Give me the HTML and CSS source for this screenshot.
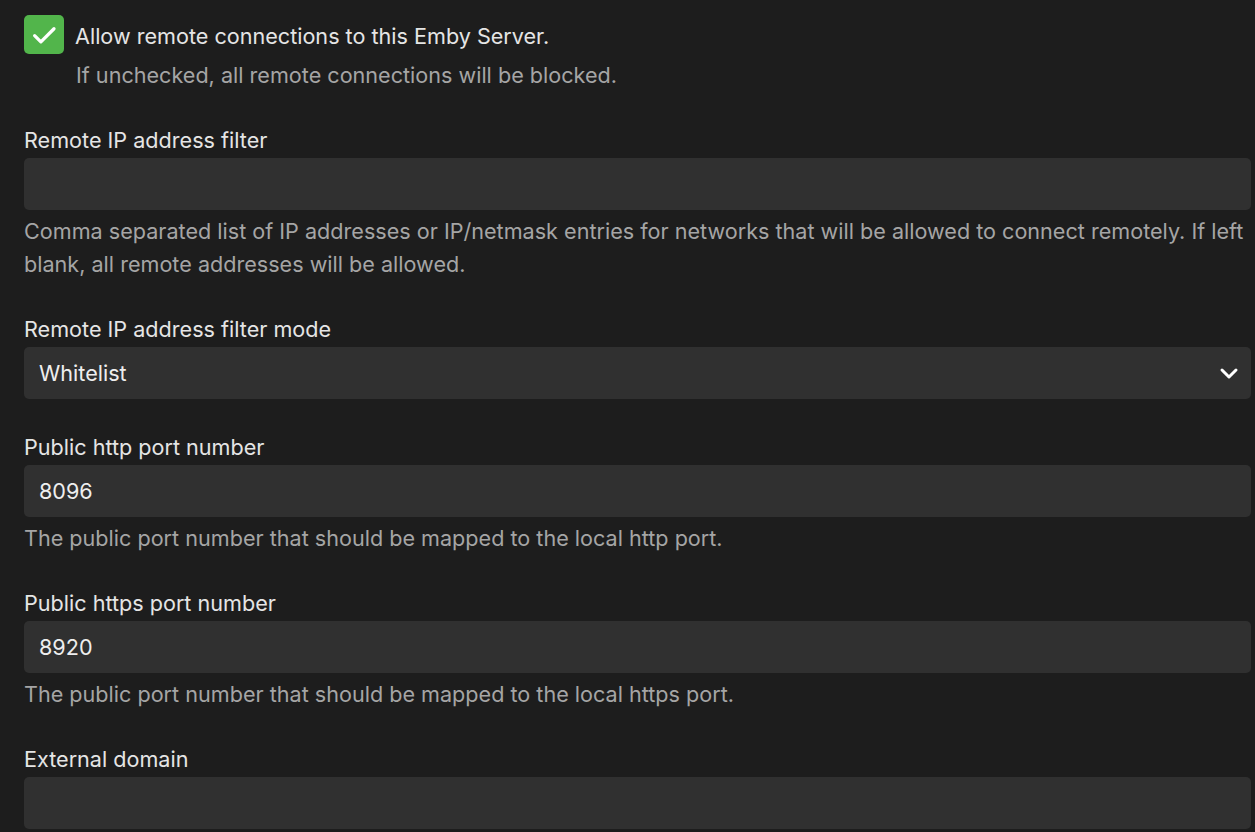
FILE: index.html
```html
<!DOCTYPE html>
<html lang="en">
<head>
<meta charset="utf-8">
<title>Remote access</title>
<link rel="stylesheet" href="styles.css">
</head>
<body>
<div class="page">
  <div class="check-row">
    <span class="checkbox">
      <svg viewBox="0 0 24 24" width="30" height="30"><path d="M4.5 12.5l5 5L20 7" fill="none" stroke="#fff" stroke-width="2.6" stroke-linecap="round" stroke-linejoin="round"/></svg>
    </span>
    <span class="check-label">Allow remote connections to this Emby Server.</span>
  </div>
  <div class="check-help">If unchecked, all remote connections will be blocked.</div>

  <div class="field first">
    <label class="label">Remote IP address filter</label>
    <div class="input"></div>
    <div class="help">Comma separated list of IP addresses or IP/netmask entries for networks that will be allowed to connect remotely. If left blank, all remote addresses will be allowed.</div>
  </div>

  <div class="field">
    <label class="label">Remote IP address filter mode</label>
    <div class="input select">
      <span>Whitelist</span>
      <svg viewBox="0 0 24 24" width="24" height="24"><path d="M5 9l7 7 7-7" fill="none" stroke="#fff" stroke-width="3" stroke-linecap="round" stroke-linejoin="round"/></svg>
    </div>
  </div>

  <div class="field">
    <label class="label">Public http port number</label>
    <div class="input">8096</div>
    <div class="help">The public port number that should be mapped to the local http port.</div>
  </div>

  <div class="field">
    <label class="label">Public https port number</label>
    <div class="input">8920</div>
    <div class="help">The public port number that should be mapped to the local https port.</div>
  </div>

  <div class="field">
    <label class="label">External domain</label>
    <div class="input"></div>
  </div>
</div>
</body>
</html>
```
FILE: styles.css
```css
html, body {
  margin: 0;
  padding: 0;
  background: #1d1d1d;
  overflow: hidden;
}
.page {
  padding: 15px 4px 0 24px;
  font-family: Inter, "Noto Sans", sans-serif;
  color: #e5e5e5;
  font-size: 21.6px;
}
.check-row {
  display: flex;
  align-items: center;
  gap: 11px;
}
.checkbox {
  width: 40px;
  height: 39px;
  background: #52b54b;
  border-radius: 5px;
  display: flex;
  align-items: center;
  justify-content: center;
  flex: none;
}
.check-label {
  line-height: 26px;
  margin-top: 3px;
}
.check-help {
  margin-left: 52px;
  margin-top: 8px;
  color: #a5a5a5;
  line-height: 26px;
}
.field {
  margin-top: 35px;
  display: flex;
  flex-direction: column;
}
.field.first {
  margin-top: 39px;
}
.label {
  line-height: 26px;
  margin-bottom: 5px;
}
.input {
  height: 52px;
  background: #303030;
  border-radius: 5px;
  display: flex;
  align-items: center;
  padding: 0 15px;
  box-sizing: border-box;
  color: #eeeeee;
}
.select {
  justify-content: space-between;
  padding-right: 10px;
}
.help {
  color: #a5a5a5;
  line-height: 33px;
  margin-top: 5px;
}
```
